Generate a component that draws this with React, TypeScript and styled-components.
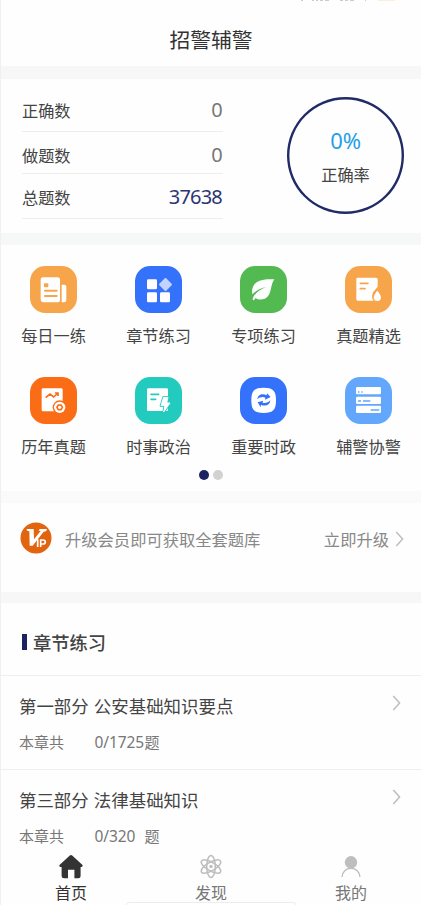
import React from "react";
import styled, { createGlobalStyle } from "styled-components";

const GlobalStyle = createGlobalStyle`
  * { box-sizing: border-box; }
  body { margin: 0; background: #fff; }
`;

const Screen = styled.div`
  display: flex;
  flex-direction: column;
  width: 421px;
  height: 905px;
  overflow: hidden;
  background: #fefefe;
  border-left: 1px solid #f0f0f0;
  font-family: "Noto Sans CJK SC", sans-serif;
  font-weight: 400;
  color: #444;
  white-space: nowrap;
`;

const StatusRemnant = styled.svg`
  display: block;
  width: 100%;
  height: 3px;
  flex: none;
`;

const TitleBar = styled.header`
  height: 63px;
  flex: none;
  display: flex;
  justify-content: center;
  padding-top: 21px;
  font-size: 20.8px;
  line-height: 30px;
  color: #333;
`;

const Band = styled.div<{ $h: number; $tone: string }>`
  height: ${(p) => p.$h}px;
  flex: none;
  background: ${(p) => p.$tone};
`;

const Stats = styled.section`
  height: 154px;
  flex: none;
  display: flex;
  justify-content: space-between;
  padding: 0 17px 0 21px;
`;

const StatList = styled.div`
  width: 201px;
`;

const StatRow = styled.div<{ $h: number; $gap: number }>`
  height: ${(p) => p.$h}px;
  display: flex;
  align-items: flex-end;
  justify-content: space-between;
  padding-bottom: ${(p) => p.$gap}px;
  border-bottom: 1px solid #eceeee;
  font-size: 16.2px;
  line-height: 24px;
  color: #444;
`;

const StatValue = styled.span<{ $navy?: boolean }>`
  font-family: "Noto Sans", "Noto Sans CJK SC", sans-serif;
  font-size: 20px;
  letter-spacing: -0.8px;
  margin-right: 1px;
  color: ${(p) => (p.$navy ? "#2b3674" : "#777")};
`;

const Ring = styled.div`
  width: 117px;
  height: 117px;
  margin-top: 18px;
  border-radius: 50%;
  box-shadow: inset 0 0 0 2.4px #202a66;
  display: flex;
  flex-direction: column;
  align-items: center;
`;

const RingPercent = styled.div`
  margin-top: 27px;
  font-family: "Noto Sans", "Noto Sans CJK SC", sans-serif;
  font-size: 22px;
  line-height: 32px;
  letter-spacing: -0.3px;
  color: #23a0e6;
`;

const RingLabel = styled.div`
  margin-top: 6px;
  font-size: 16.2px;
  line-height: 24px;
`;

const Shortcuts = styled.section`
  height: 246px;
  flex: none;
  padding-top: 21px;
`;

const ShortcutGrid = styled.div`
  display: grid;
  grid-template-columns: repeat(4, 1fr);
  grid-auto-rows: 111px;
`;

const Shortcut = styled.div`
  display: flex;
  flex-direction: column;
  align-items: center;
  font-size: 16.2px;
  line-height: 24px;
  gap: 10px;
`;

const Tile = styled.svg`
  display: block;
  width: 47px;
  height: 47px;
`;

const Dots = styled.div`
  display: flex;
  justify-content: center;
  gap: 4px;
  margin-top: -18px;
`;

const Dot = styled.i<{ $on?: boolean }>`
  width: 10px;
  height: 10px;
  border-radius: 50%;
  background: ${(p) => (p.$on ? "#1b2360" : "#d2d2d2")};
`;

const Upgrade = styled.section`
  height: 89px;
  flex: none;
  display: flex;
  align-items: flex-start;
  padding: 19px 17px 0 19px;
  font-size: 16.3px;
  color: #888;
`;

const VipMark = styled.svg`
  width: 32px;
  height: 32px;
  flex: none;
`;

const UpgradeText = styled.span`
  margin: 5px auto 0 13px;
  line-height: 24px;
`;

const UpgradeLink = styled.span`
  display: flex;
  align-items: center;
  gap: 6px;
  margin-top: 5px;
  line-height: 24px;
`;

const ChevronSvg = styled.svg`
  display: block;
  width: 9px;
  height: 16px;
  flex: none;
`;

const SectionHead = styled.h2`
  margin: 0;
  height: 73px;
  flex: none;
  display: flex;
  align-items: center;
  gap: 6px;
  padding: 5px 0 0 21px;
  border-bottom: 1px solid #efefef;
  font-size: 18.3px;
  font-weight: 500;
  line-height: 28px;
  color: #444;
`;

const Marker = styled.i`
  width: 5px;
  height: 16px;
  background: #1b2360;
`;

const Chapter = styled.article<{ $last?: boolean }>`
  height: ${(p) => (p.$last ? 78 : 94)}px;
  flex: none;
  display: flex;
  justify-content: space-between;
  padding: 17px 20px 0 18px;
  border-bottom: ${(p) => (p.$last ? "none" : "1px solid #efefef")};
`;

const ChapterTitle = styled.div`
  font-size: 17.45px;
  line-height: 26px;
  word-spacing: 1.2px;
`;

const ChapterMeta = styled.div`
  display: flex;
  gap: 30.500px;
  margin-top: 12px;
  font-size: 15px;
  line-height: 22px;
  color: #777;
`;

const Count = styled.span`
  display: flex;
  justify-content: space-between;
  width: 65px;
`;

const Done = styled.span`
  font-family: "Noto Sans", "Noto Sans CJK SC", sans-serif;
  font-size: 15.5px;
  letter-spacing: -0.1px;
`;

const ChevronSlot = styled.span`
  padding-top: 2px;
`;

const TabBar = styled.nav`
  flex: none;
  height: 54px;
  display: grid;
  grid-template-columns: repeat(3, 1fr);
`;

const Tab = styled.div<{ $active?: boolean }>`
  display: flex;
  flex-direction: column;
  align-items: center;
  padding-top: 6px;
  font-size: 16px;
  line-height: 24px;
  color: ${(p) => (p.$active ? "#333" : "#777")};
`;

const TabIcon = styled.svg`
  display: block;
  width: 26px;
  height: 26px;
  flex: none;
`;

const HomeIndicator = styled.div`
  position: fixed;
  left: 126px;
  top: 902px;
  width: 170px;
  height: 6px;
  border: 1px solid #ececec;
  border-radius: 3px;
  background: #fff;
`;

const Chevron = () => (
  <ChevronSvg viewBox="0 0 9 16" fill="none" stroke="#bdbdbd" strokeWidth="1.5">
    <path d="M1.3 1 7.6 8 1.3 15" />
  </ChevronSvg>
);

const shortcuts: { label: string; color: string; art: React.ReactNode }[] = [
  {
    label: "每日一练",
    color: "#f7a54a",
    art: (
      <>
        <path fill="#fff" d="M39 34h43q8 0 8 8v59q0 8-8 8H41q-9 0-9-9V42q0-8 7-8zM95 56h8q6 0 6 6v40q0 7-7 7h-7z" />
        <rect x="42" y="52" width="13" height="12" rx="3" fill="#f7a54a" />
        <path d="M45 74h35M45 90h35" stroke="#f7a54a" strokeWidth="6" strokeLinecap="round" />
      </>
    ),
  },
  {
    label: "章节练习",
    color: "#3472fc",
    art: (
      <>
        <g fill="#fff">
          <rect x="36" y="40" width="30" height="30" rx="4" />
          <rect x="36" y="79" width="30" height="30" rx="4" />
          <rect x="75" y="79" width="30" height="30" rx="4" />
        </g>
        <rect x="77" y="41" width="29" height="29" rx="3" fill="#c1d3fe" transform="rotate(45 91.5 55.5)" />
      </>
    ),
  },
  {
    label: "专项练习",
    color: "#53b951",
    art: (
      <path fill="#fff" d="M103 40C75 38 49 42 40 60c-4 8-5 18-3 25 9-10 23-18 41-22-19 8-35 19-40 36-1 4 4 5 6 1l3-4c8 6 24 7 34-2 14-13 10-37 22-54z" />
    ),
  },
  {
    label: "真题精选",
    color: "#f7a54a",
    art: (
      <>
        <path fill="#fff" d="M38 35h55q5 0 5 5v22L84 79q-5 10-1 20l4 5H38q-4 0-4-4V39q0-4 4-4z" />
        <path d="M46 52h23M46 68h14" stroke="#f7a54a" strokeWidth="5" strokeLinecap="round" />
        <path fill="#fff" stroke="#f7a54a" strokeWidth="4" d="M97 70c7 11 13 17 13 24a13 13 0 0 1-26 0c0-7 6-13 13-24z" />
      </>
    ),
  },
  {
    label: "历年真题",
    color: "#fb6c17",
    art: (
      <>
        <rect x="35" y="34" width="63" height="69" rx="4" fill="#fff" />
        <path d="m47 62 13-11 11 9 13-12M75 48h9v9" fill="none" stroke="#fb6c17" strokeWidth="5" />
        <circle cx="89" cy="91" r="21" fill="#fb6c17" />
        <circle cx="89" cy="91" r="17" fill="#fff" />
        <path d="m83.500 81.500h11l5.500 9.500-5.500 9.500h-11L78 91z" fill="#fb6c17" />
        <circle cx="89" cy="91" r="5" fill="#fff" />
      </>
    ),
  },
  {
    label: "时事政治",
    color: "#22cbbd",
    art: (
      <>
        <rect x="36" y="34" width="63" height="68" rx="4" fill="#fff" />
        <path d="M48 52h23M48 67h14" stroke="#22cbbd" strokeWidth="5" strokeLinecap="round" />
        <path d="M86 61h13l-4 17h10L86 105l4-19H78z" fill="#fff" stroke="#22cbbd" strokeWidth="8" strokeLinejoin="round" />
        <path d="M86 61h13l-4 17h10L86 105l4-19H78z" fill="#fff" stroke="#fff" strokeWidth="3" strokeLinejoin="round" />
      </>
    ),
  },
  {
    label: "重要时政",
    color: "#3472fc",
    art: (
      <>
        <path fill="#fff" d="M71 32c28 0 37 9 37 38s-9 38-37 38-37-9-37-38 9-38 37-38z" />
        <path fill="#3472fc" d="M52 67c1-16 17-19 28-12l1-6 11 11-17 8 1-6c-8-4-17-1-24 5zM91 70c-1 16-17 19-28 13l-1 8-9-15 16-5-1 6c8 3 16 0 23-7z" />
      </>
    ),
  },
  {
    label: "辅警协警",
    color: "#63a7fc",
    art: (
      <>
        <g fill="#fff">
          <rect x="33" y="30" width="75" height="22" rx="4" />
          <rect x="33" y="59" width="75" height="22" rx="4" />
          <rect x="33" y="86" width="75" height="22" rx="4" />
        </g>
        <path d="M39 45h4M49 45h4M39 72h9M54 72h22M77 99h26" stroke="#63a7fc" strokeWidth="5" />
      </>
    ),
  },
];

const chapters = [
  { title: "第一部分 公安基础知识要点", done: "0/1725" },
  { title: "第三部分 法律基础知识", done: "0/320" },
];

export default function App() {
  return (
    <>
      <GlobalStyle />
      <Screen>
        <StatusRemnant viewBox="0 0 420 3">
          <path d="M300 0h2M311 0h2M315 0h2M319 0h3M324 0h4M339 0h3M344 0h3M349 0h4M364 0h1" stroke="#bbb" strokeWidth="1.5" />
          <path d="M377 .5h17" stroke="#fbeedb" />
        </StatusRemnant>
        <TitleBar>招警辅警</TitleBar>
        <Band $h={13} $tone="#f7f7f7" />
        <Stats>
          <StatList>
            <StatRow $h={53} $gap={9}>正确数<StatValue>0</StatValue></StatRow>
            <StatRow $h={42} $gap={6}>做题数<StatValue>0</StatValue></StatRow>
            <StatRow $h={45} $gap={9}>总题数<StatValue $navy>37638</StatValue></StatRow>
          </StatList>
          <Ring>
            <RingPercent>0%</RingPercent>
            <RingLabel>正确率</RingLabel>
          </Ring>
        </Stats>
        <Band $h={12} $tone="#f6f7f7" />
        <Shortcuts>
          <ShortcutGrid>
            {shortcuts.map((s) => (
              <Shortcut key={s.label}>
                <Tile viewBox="0 0 141 141">
                  <rect width="141" height="141" rx="46" fill={s.color} />
                  {s.art}
                </Tile>
                {s.label}
              </Shortcut>
            ))}
          </ShortcutGrid>
          <Dots><Dot $on /><Dot /></Dots>
        </Shortcuts>
        <Band $h={12} $tone="#fafafa" />
        <Upgrade>
          <VipMark viewBox="0 0 96 96">
            <circle cx="48" cy="48" r="46.500" fill="#e3640f" />
            <path fill="#fff" d="M20 21h21l1 31 20-25-6-1 3-5h22l-3 7-7 1-33 42h-9l-1-43-7-2z" />
            <path d="M53 52v23M62 75V54h7q7 0 7 6t-7 6h-7" fill="none" stroke="#fff" strokeWidth="5" />
          </VipMark>
          <UpgradeText>升级会员即可获取全套题库</UpgradeText>
          <UpgradeLink>立即升级<Chevron /></UpgradeLink>
        </Upgrade>
        <Band $h={11} $tone="#f7f7f7" />
        <SectionHead><Marker />章节练习</SectionHead>
        {chapters.map((c, i) => (
          <Chapter key={c.title} $last={i === 1}>
            <div>
              <ChapterTitle>{c.title}</ChapterTitle>
              <ChapterMeta>
                <span>本章共</span>
                <Count><Done>{c.done}</Done><span>题</span></Count>
              </ChapterMeta>
            </div>
            <ChevronSlot><Chevron /></ChevronSlot>
          </Chapter>
        ))}
        <TabBar>
          <Tab $active>
            <TabIcon viewBox="0 0 26 26">
              <path fill="#333" d="M11.800 1.500q1.200-1 2.400 0L24.500 11q.8 1.800-1 1.900H22.600V22q0 2.300-2.300 2.300H16.400v-8.500H10v8.500H6Q3.600 24.300 3.600 22v-9.100H2.300Q.6 12.600 1.500 11z" />
            </TabIcon>
            首页
          </Tab>
          <Tab>
            <TabIcon viewBox="0 0 26 26" fill="none" stroke="#bebebe" strokeWidth="1.500">
              <ellipse cx="13" cy="12.500" rx="4.300" ry="11" />
              <ellipse cx="13" cy="12.500" rx="4.300" ry="11" transform="rotate(60 13 12.500)" />
              <ellipse cx="13" cy="12.500" rx="4.300" ry="11" transform="rotate(120 13 12.500)" />
              <circle cx="13" cy="12.500" r="1.700" fill="#bebebe" stroke="none" />
            </TabIcon>
            发现
          </Tab>
          <Tab>
            <TabIcon viewBox="0 0 26 26">
              <circle cx="13" cy="8.300" r="6.200" fill="#bebebe" />
              <path d="M4 23c.3-5 4-8.700 9-8.700s8.700 3.700 9 8.700" fill="none" stroke="#bebebe" strokeWidth="1.400" />
            </TabIcon>
            我的
          </Tab>
        </TabBar>
      </Screen>
      <HomeIndicator />
    </>
  );
}
